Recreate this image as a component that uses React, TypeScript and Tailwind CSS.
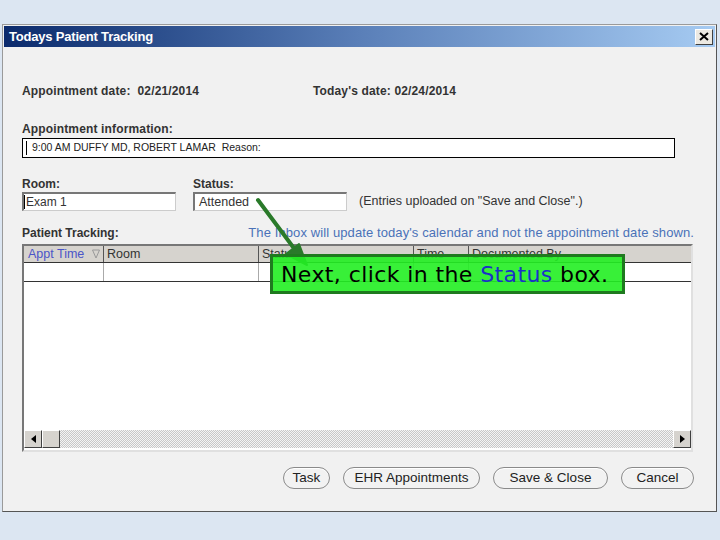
import React from "react";

const font = { fontFamily: '"Liberation Sans", Arial, sans-serif' };

function PillButton({ label, w }: { label: string; w: string }) {
  return (
    <div
      className={`${w} h-[22px] rounded-full border border-[#8a8a8a] bg-[#f2f2f2] flex items-center justify-center text-[13.5px] text-[#222] shadow-[inset_0_1px_0_#fff]`}
    >
      {label}
    </div>
  );
}

export default function App() {
  return (
    <div
      className="relative w-[720px] h-[540px] overflow-hidden bg-[#dce6f2] pt-[24px] pl-[2px]"
      style={font}
    >
      <div className="w-[715px] h-[488px] border border-[#9a9a9a] border-r-[#555] border-b-[#555] bg-[#f1f1f1] flex flex-col">
        {/* title bar */}
        <div className="mx-[1px] mt-[1px] h-[21px] bg-gradient-to-r from-[#0b2a6c] via-[#5a7fb8] to-[#a6cbf2] flex items-center justify-between pl-[5px] pr-[2px]">
          <span className="text-white font-bold text-[13px] tracking-[-0.2px]">Todays Patient Tracking</span>
          <div className="w-[18px] h-[16px] bg-[#ece9e2] border border-t-white border-l-white border-r-[#404040] border-b-[#404040] flex items-center justify-center">
            <svg width="10" height="9" viewBox="0 0 10 9">
              <path d="M1 1 L9 8 M9 1 L1 8" stroke="#000" strokeWidth="2" />
            </svg>
          </div>
        </div>

        {/* body */}
        <div className="flex-1 pl-[19px] pr-[22px] flex flex-col">
          <div className="mt-[36px] flex text-[12px] font-bold text-[#333] h-[16px] items-center tracking-[0.15px]">
            <span className="w-[291px]">Appointment date:&nbsp; 02/21/2014</span>
            <span>Today's date: 02/24/2014</span>
          </div>

          <div className="mt-[23px] text-[12px] font-bold text-[#333] h-[14px] leading-[14px] tracking-[0.15px]">Appointment information:</div>
          <div className="mt-[2px] w-[653px] h-[20px] border border-black bg-white flex items-center pl-[3px] text-[10.5px] text-[#222]">
            <span className="w-[1px] h-[14px] bg-black mr-[5px]"></span>
            9:00 AM DUFFY MD, ROBERT LAMAR&nbsp; Reason:
          </div>

          <div className="mt-[19px] flex text-[12px] font-bold text-[#333] h-[14px] leading-[14px]">
            <span className="w-[171px]">Room:</span>
            <span>Status:</span>
          </div>
          <div className="mt-[1px] flex items-center h-[19px]">
            <div className="w-[154px] h-[19px] bg-white border border-[#777] border-r-[#ccc] border-b-[#ccc] border-t-2 border-l-2 flex items-center text-[12px] text-[#333]">
              <span className="w-[1px] h-[14px] bg-black mr-[1px]"></span>Exam 1
            </div>
            <div className="ml-[17px] w-[154px] h-[19px] bg-white border border-[#777] border-r-[#ccc] border-b-[#ccc] border-t-2 border-l-2 flex items-center pl-[4px] text-[12.5px] text-[#333]">
              Attended
            </div>
            <span className="ml-[12px] text-[12.5px] text-[#333]">(Entries uploaded on "Save and Close".)</span>
          </div>

          <div className="mt-[15px] flex items-end justify-between h-[14px] leading-[14px] pr-[0px]">
            <span className="text-[12px] font-bold text-[#333]">Patient Tracking:</span>
            <span className="text-[13px] text-[#4a72b8] tracking-[0.1px]">
              The Inbox will update today's calendar and not the appointment date shown.
            </span>
          </div>

          {/* table */}
          <div className="mt-[4px] w-[671px] h-[208px] border-2 border-[#777] border-r-[#e0e0e0] border-b-[#e0e0e0] bg-white flex flex-col">
            <div className="h-[17px] bg-[#d6d3ce] flex text-[12.5px] text-[#333] border-b border-[#333]">
              <div className="w-[80px] border-r border-[#555] flex items-center justify-between pl-[4px] pr-[3px] text-[#4a55c8]">
                <span>Appt Time</span>
                <svg width="8" height="10" viewBox="0 0 8 10">
                  <path d="M0.5 1 L7.5 1 L4 9 Z" fill="none" stroke="#999" strokeWidth="1" />
                </svg>
              </div>
              <div className="w-[155px] border-r border-[#555] flex items-center pl-[3px]">Room</div>
              <div className="w-[155px] border-r border-[#555] flex items-center pl-[3px]">Status</div>
              <div className="w-[55px] border-r border-[#555] flex items-center pl-[3px]">Time</div>
              <div className="flex-1 flex items-center pl-[3px]">Documented By</div>
            </div>
            <div className="h-[19px] flex border-b border-[#333]">
              <div className="w-[80px] border-r border-[#aaa]"></div>
              <div className="w-[155px] border-r border-[#aaa]"></div>
              <div className="w-[155px] border-r border-[#aaa]"></div>
              <div className="w-[55px] border-r border-[#aaa]"></div>
              <div className="flex-1"></div>
            </div>
            <div className="flex-1"></div>
            <div className="h-[18px] flex bg-[repeating-conic-gradient(#c8c8c8_0_25%,#f4f4f4_0_50%)] bg-[length:2px_2px] mb-[2px]">
              <div className="w-[18px] h-[18px] bg-[#d6d3ce] border border-t-white border-l-white border-r-[#404040] border-b-[#404040] flex items-center justify-center">
                <svg width="5" height="8" viewBox="0 0 5 8"><path d="M5 0 L0 4 L5 8 Z" fill="#000" /></svg>
              </div>
              <div className="w-[18px] h-[18px] bg-[#d6d3ce] border border-t-white border-l-white border-r-[#404040] border-b-[#404040]"></div>
              <div className="flex-1"></div>
              <div className="w-[18px] h-[18px] bg-[#d6d3ce] border border-t-white border-l-white border-r-[#404040] border-b-[#404040] flex items-center justify-center">
                <svg width="5" height="8" viewBox="0 0 5 8"><path d="M0 0 L5 4 L0 8 Z" fill="#000" /></svg>
              </div>
            </div>
          </div>

          {/* buttons */}
          <div className="mt-[15px] flex justify-end gap-[13px] pr-[0px]">
            <PillButton label="Task" w="w-[47px]" />
            <PillButton label="EHR Appointments" w="w-[137px]" />
            <PillButton label="Save & Close" w="w-[115px]" />
            <PillButton label="Cancel" w="w-[73px]" />
          </div>
        </div>
      </div>

      {/* overlay arrow */}
      <svg className="absolute left-0 top-0" width="720" height="540" viewBox="0 0 720 540">
        <line x1="258" y1="200" x2="299" y2="255" stroke="#2a7a2a" strokeWidth="4" strokeLinecap="round" />
        <path d="M307 265 L286 254 L299 244 Z" fill="#2a7a2a" stroke="#2a7a2a" strokeWidth="2" strokeLinejoin="round" />
      </svg>

      {/* callout */}
      <div
        className="absolute left-[270px] top-[254px] w-[355px] h-[40px] border-[3px] border-[#1f7a1f] bg-[#22ee22]/90 flex items-center pl-[8px] text-[22px] text-black"
        style={{ fontFamily: '"DejaVu Sans", sans-serif', letterSpacing: "0.4px" }}
      >
        Next, click in the&nbsp;<span className="text-[#1a32c8]">Status</span>&nbsp;box.
      </div>
    </div>
  );
}
